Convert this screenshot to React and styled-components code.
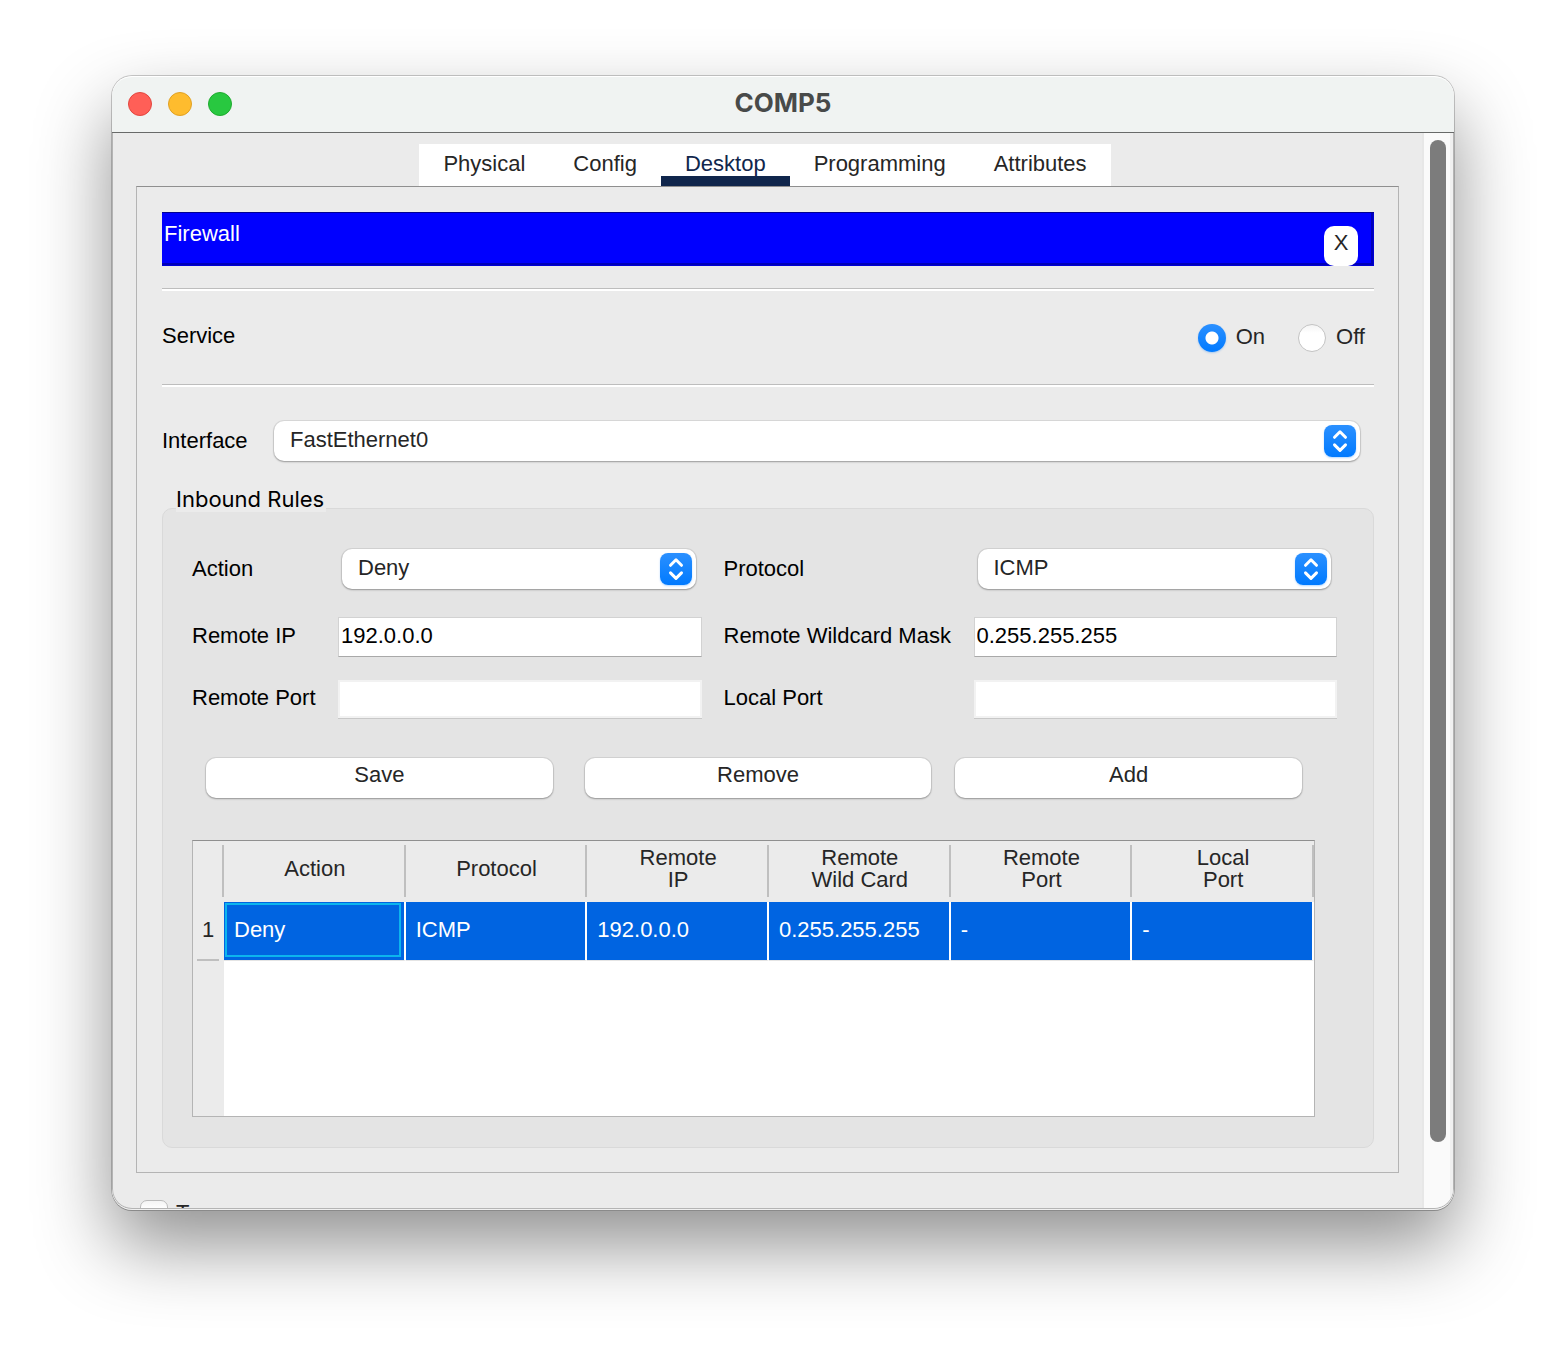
import React, { useState } from "react";
import styled, { createGlobalStyle } from "styled-components";

const GlobalStyle = createGlobalStyle`
  *, *::before, *::after { box-sizing: border-box; }
  body {
    margin: 0;
    background: #fff;
    color: #000;
    font-family: "Liberation Sans", Arial, Helvetica, sans-serif;
    font-size: 22px;
    line-height: 24px;
    -webkit-font-smoothing: antialiased;
  }
  button, input, select { font: inherit; margin: 0; }
`;

const Page = styled.div`
  padding: 76px 112px 148px;
  overflow: hidden;
`;

const Window = styled.div`
  border-radius: 20px;
  overflow: hidden;
  background: #ebebeb;
  box-shadow: 0 1px 0 #f0f0f0, 0 2px 0 #8a8a8a, 0 0 0 1px rgba(0, 0, 0, 0.2),
    0 36px 76px rgba(0, 0, 0, 0.44);
`;

const TitleBar = styled.header`
  display: grid;
  grid-template-columns: 1fr auto 1fr;
  align-items: center;
  height: 57px;
  padding: 0 16px 1px;
  background: #f0f3f2;
  border-bottom: 1px solid #686a69;
  border-radius: 20px 20px 0 0;
  box-shadow: inset 0 1px 0 #fff;
`;

const Lights = styled.div`
  display: flex;
  gap: 16px;
`;

const Light = styled.button`
  width: 24px;
  height: 24px;
  padding: 0;
  border-radius: 50%;
  border: 1px solid ${(p) => p.$edge};
  background: ${(p) => p.$fill};
`;

const Title = styled.h1`
  margin: 0;
  padding-bottom: 2px;
  font: 700 26px/32px Inter, "Open Sans", sans-serif;
  color: #484a49;
`;

const Viewport = styled.div`
  display: flex;
  overflow: hidden;
  border: 1px solid #b4b4b4;
  border-top: 0;
  border-radius: 0 0 20px 20px;
`;

const Content = styled.div`
  flex: 1;
  min-width: 0;
  padding: 11px 25px 0 23px;
`;

const Track = styled.div`
  width: 29px;
  padding: 7px 0 66px 6px;
  background: linear-gradient(to right, #fafafa 26px, #f0f0f0 26px);
  box-shadow: -2px 0 0 #e7e7e7;
`;

const Thumb = styled.div`
  width: 16px;
  height: 100%;
  border-radius: 8px;
  background: #7c7c7c;
`;

const Tabs = styled.nav`
  display: flex;
  justify-content: center;
  padding-right: 5px;
`;

const Tab = styled.button`
  height: 42px;
  padding: ${(p) => (p.$active ? "8px 24px 0" : "0 24px 2px")};
  border: 0;
  border-bottom: ${(p) => (p.$active ? "10px solid #10264c" : "0 solid")};
  background: #fff;
  color: ${(p) => (p.$active ? "#10264c" : "#262626")};
  line-height: 24px;
`;

const Panel = styled.main`
  padding: 25px 24px 24px 25px;
  border: 1px solid #b4b4b4;
  border-top-color: #8f8f8f;
`;

const Banner = styled.div`
  display: flex;
  justify-content: space-between;
  height: 54px;
  padding: 10px 16px 0 2px;
  background: #00f;
  color: #fff;
  box-shadow: inset 0 1px 0 #000090, inset -1px -1px 0 #0000d8,
    inset -3px -3px 0 #0000b8;
`;

const CloseButton = styled.button`
  align-self: flex-end;
  width: 34px;
  height: 40px;
  padding: 0 0 6px;
  border: 0;
  border-radius: 10px;
  background: #fff;
  color: #262626;
`;

const Rule = styled.hr`
  height: 3px;
  margin: ${(p) => p.$top}px 0 0;
  border: 0;
  border-top: 1px solid #bdbdbd;
  background: #fff;
`;

const ServiceRow = styled.div`
  display: flex;
  align-items: center;
  justify-content: space-between;
  height: 93px;
  padding-right: 9px;
`;

const ServiceName = styled.span`
  padding-bottom: 4px;
`;

const RadioGroup = styled.div`
  display: flex;
  gap: 33px;
`;

const RadioLabel = styled.label`
  display: flex;
  align-items: center;
  gap: 10px;
  color: #262626;
`;

const RadioText = styled.span`
  padding-bottom: 2px;
`;

const Radio = styled.input`
  appearance: none;
  width: 28px;
  height: 28px;
  border-radius: 50%;
  border: 1px solid #c4c4c4;
  background: linear-gradient(#f4f4f4, #fff 30%);
  &:checked {
    border: 0;
    background: radial-gradient(circle, #fff 6px, transparent 7px),
      linear-gradient(#2b90ff, #007aff);
    box-shadow: 0 1px 2px rgba(0, 122, 255, 0.3);
  }
`;

const InterfaceRow = styled.div`
  display: grid;
  grid-template-columns: 112px 1fr;
  align-items: center;
  padding: 34px 14px 0 0;
`;

const Label = styled.label`
  padding: 0 0 ${(p) => p.$lift || 0}px ${(p) => (p.$inset ? 22 : 0)}px;
  white-space: nowrap;
`;

const SelectBox = styled.div`
  position: relative;
  margin: ${(p) => (p.$inGrid ? "0 6px 0 4px" : "0")};
`;

const SelectField = styled.select`
  appearance: none;
  display: block;
  width: 100%;
  height: 40px;
  padding: 0 40px 3px 16px;
  border: 0;
  border-radius: 10px;
  background: #fff;
  color: #262626;
  box-shadow: 0 0 0 1px rgba(0, 0, 0, 0.07), 0 1px 2px rgba(0, 0, 0, 0.3);
`;

const Stepper = styled.svg`
  position: absolute;
  top: 4px;
  right: 4px;
  width: 32px;
  height: 32px;
  border-radius: 8px;
  background: linear-gradient(#2b90ff, #007aff);
  box-shadow: 0 1px 2px rgba(0, 122, 255, 0.3);
  pointer-events: none;
`;

const Group = styled.fieldset`
  min-width: 0;
  margin: 26px 0 0;
  padding: 0;
  border: 0;
`;

const Legend = styled.legend`
  position: relative;
  height: 25px;
  margin-left: 14px;
  padding: 0 2px 0 0;
  background: #ebebeb;
  font: 400 22px/24px Inter, "Open Sans", sans-serif;
`;

const GroupBody = styled.div`
  margin-top: -4px;
  padding: 35px 36px 30px 29px;
  border: 1px solid #d9d9d9;
  border-radius: 10px;
  background: #e4e4e4;
`;

const Form = styled.div`
  display: grid;
  grid-template-columns: 146px 1fr 272px 1fr;
  grid-template-rows: 50px 42px 38px;
  row-gap: 22px;
  align-items: center;
`;

const TextField = styled.input`
  width: 100%;
  height: 40px;
  padding: 0 2px 3px;
  border: 1px solid #d2d2d2;
  border-bottom-color: #a9a9a9;
  border-radius: 0;
  background: #fff;
  color: #000;
  outline: 0;
  &:placeholder-shown {
    height: 38px;
    border: 2px solid #f2f2f2;
    box-shadow: 0 1px 0 #c8c8c8;
  }
`;

const Buttons = styled.div`
  display: flex;
  gap: 24px;
  margin: 40px 35px 42px 14px;
`;

const PushButton = styled.button`
  flex: 1;
  height: 40px;
  margin-right: ${(p) => (p.$spaced ? 8 : 0)}px;
  padding: 0 0 6px;
  border: 0;
  border-radius: 10px;
  background: #fff;
  color: #262626;
  box-shadow: 0 0 0 1px rgba(0, 0, 0, 0.07), 0 1px 2px rgba(0, 0, 0, 0.3);
`;

const TableFrame = styled.div`
  height: 277px;
  margin-right: 22px;
  border: 1px solid #b4b4b4;
  border-top-color: #8f8f8f;
  background: linear-gradient(to right, #ebebeb 31px, #fff 31px);
`;

const Table = styled.table`
  width: 100%;
  table-layout: fixed;
  border-spacing: 0;
`;

const Corner = styled.col`
  width: 31px;
`;

const HeadCell = styled.th`
  height: 61px;
  padding: 0 0 6px;
  background: linear-gradient(#bfbfbf, #bfbfbf) right 4px / 2px 52px no-repeat #ebebeb;
  color: #262626;
  font-weight: 400;
  line-height: 22px;
  white-space: pre-line;
`;

const RowHead = styled.th`
  height: 59px;
  padding: 0 1px 4px 0;
  background: linear-gradient(#bfbfbf, #bfbfbf) 4px bottom / 22px 2px no-repeat #ebebeb;
  color: #262626;
  font-weight: 400;
`;

const Cell = styled.td`
  position: relative;
  height: 59px;
  padding: 0 8px 3px 10px;
  border-right: 2px solid #fff;
  border-bottom: 1px solid #e4e4e4;
  background: #0064e1;
  background-clip: padding-box;
  color: #fff;
  &::after {
    content: "";
    display: ${(p) => (p.$focused ? "block" : "none")};
    position: absolute;
    inset: 1px 3px 3px 1px;
    border: 2px solid #0cb4ee;
  }
`;

const Footer = styled.div`
  display: flex;
  gap: 8px;
  height: 35px;
  padding: 27px 0 0 4px;
  overflow: hidden;
`;

const FooterLabel = styled.label`
  color: #262626;
  line-height: 26px;
`;

const CheckBox = styled.input`
  appearance: none;
  flex: none;
  width: 28px;
  height: 28px;
  border: 1px solid #bbb;
  border-radius: 7px;
  background: linear-gradient(#f4f4f4, #fff 30%);
`;

const tabs = ["Physical", "Config", "Desktop", "Programming", "Attributes"];
const columns = [
  "Action",
  "Protocol",
  "Remote\nIP",
  "Remote\nWild Card",
  "Remote\nPort",
  "Local\nPort",
];
const rules = [["Deny", "ICMP", "192.0.0.0", "0.255.255.255", "-", "-"]];

function Select({ id, options, inGrid }) {
  return (
    <SelectBox $inGrid={inGrid}>
      <SelectField id={id}>
        {options.map((o) => (
          <option key={o}>{o}</option>
        ))}
      </SelectField>
      <Stepper
        viewBox="0 0 32 32"
        fill="none"
        stroke="#fff"
        strokeWidth="3"
        strokeLinecap="round"
        strokeLinejoin="round"
        aria-hidden="true"
      >
        <path d="M10.500 12.300 16 6.800l5.500 5.500M10.500 19.900 16 25.400l5.500-5.500" />
      </Stepper>
    </SelectBox>
  );
}

export default function App() {
  const [active, setActive] = useState("Desktop");
  const [service, setService] = useState("On");

  return (
    <Page>
      <GlobalStyle />
      <Window>
        <TitleBar>
          <Lights>
            <Light aria-label="Close" $fill="#ff5f57" $edge="#e2463f" />
            <Light aria-label="Minimize" $fill="#febc2e" $edge="#e0a023" />
            <Light aria-label="Zoom" $fill="#28c840" $edge="#1fab2f" />
          </Lights>
          <Title>COMP5</Title>
        </TitleBar>
        <Viewport>
          <Content>
            <Tabs>
              {tabs.map((t) => (
                <Tab key={t} $active={t === active} onClick={() => setActive(t)}>
                  {t}
                </Tab>
              ))}
            </Tabs>
            <Panel>
              <Banner>
                Firewall
                <CloseButton>X</CloseButton>
              </Banner>
              <Rule $top={22} />
              <ServiceRow>
                <ServiceName>Service</ServiceName>
                <RadioGroup>
                  {["On", "Off"].map((v) => (
                    <RadioLabel key={v}>
                      <Radio
                        type="radio"
                        name="service"
                        checked={service === v}
                        onChange={() => setService(v)}
                      />
                      <RadioText>{v}</RadioText>
                    </RadioLabel>
                  ))}
                </RadioGroup>
              </ServiceRow>
              <Rule $top={0} />
              <InterfaceRow>
                <Label htmlFor="interface">Interface</Label>
                <Select id="interface" options={["FastEthernet0"]} />
              </InterfaceRow>
              <Group>
                <Legend>Inbound Rules</Legend>
                <GroupBody>
                  <Form>
                    <Label htmlFor="action">Action</Label>
                    <Select id="action" options={["Deny", "Allow"]} inGrid />
                    <Label htmlFor="protocol" $inset>Protocol</Label>
                    <Select id="protocol" options={["ICMP", "IP", "TCP", "UDP"]} inGrid />
                    <Label htmlFor="remote-ip" $lift={2}>Remote IP</Label>
                    <TextField id="remote-ip" defaultValue="192.0.0.0" />
                    <Label htmlFor="mask" $inset $lift={2}>Remote Wildcard Mask</Label>
                    <TextField id="mask" defaultValue="0.255.255.255" />
                    <Label htmlFor="remote-port" $lift={2}>Remote Port</Label>
                    <TextField id="remote-port" placeholder=" " />
                    <Label htmlFor="local-port" $inset $lift={2}>Local Port</Label>
                    <TextField id="local-port" placeholder=" " />
                  </Form>
                  <Buttons>
                    <PushButton $spaced>Save</PushButton>
                    <PushButton>Remove</PushButton>
                    <PushButton>Add</PushButton>
                  </Buttons>
                  <TableFrame>
                    <Table>
                      <colgroup>
                        <Corner />
                      </colgroup>
                      <thead>
                        <tr>
                          <HeadCell as="td" />
                          {columns.map((c) => (
                            <HeadCell key={c} scope="col">{c}</HeadCell>
                          ))}
                        </tr>
                      </thead>
                      <tbody>
                        {rules.map((rule, r) => (
                          <tr key={r}>
                            <RowHead scope="row">{r + 1}</RowHead>
                            {rule.map((v, c) => (
                              <Cell key={c} $focused={r === 0 && c === 0}>{v}</Cell>
                            ))}
                          </tr>
                        ))}
                      </tbody>
                    </Table>
                  </TableFrame>
                </GroupBody>
              </Group>
            </Panel>
            <Footer>
              <CheckBox type="checkbox" id="top" />
              <FooterLabel htmlFor="top">Top</FooterLabel>
            </Footer>
          </Content>
          <Track>
            <Thumb />
          </Track>
        </Viewport>
      </Window>
    </Page>
  );
}
